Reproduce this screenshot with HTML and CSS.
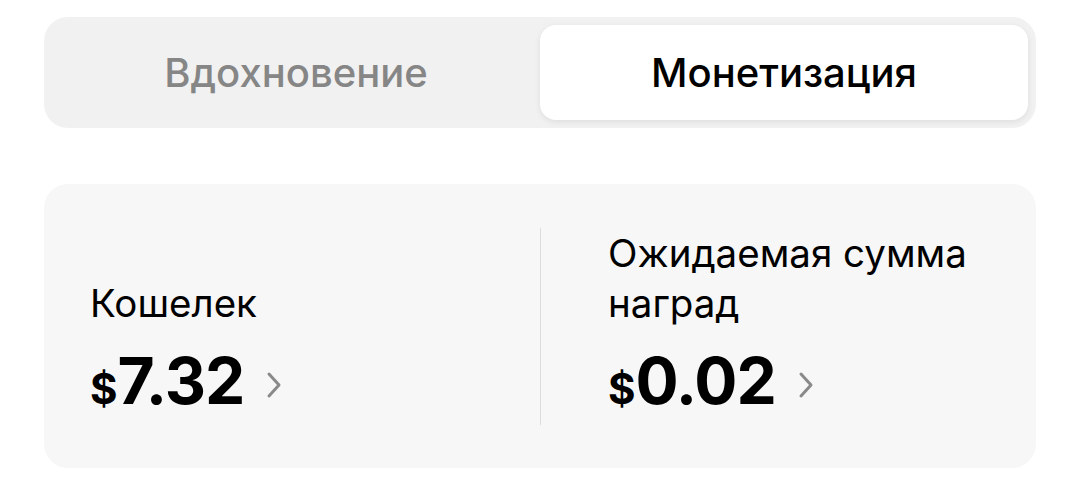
FILE: index.html
```html
<!DOCTYPE html>
<html lang="ru">
<head>
    <meta charset="UTF-8">
    <meta name="viewport" content="width=device-width, initial-scale=1.0">
    <title>Монетизация</title>
    <link rel="stylesheet" href="styles.css">
</head>
<body>
    <div class="page">
        <div class="tabs">
            <div class="tab">Вдохновение</div>
            <div class="tab active">Монетизация</div>
        </div>

        <div class="card">
            <div class="col">
                <div class="label">Кошелек</div>
                <div class="value">
                    <span class="currency">$</span><span class="amount">7.32</span>
                    <svg class="chevron" width="16" height="28" viewBox="0 0 16 28">
                        <path d="M3 3 L13 14 L3 25" fill="none" stroke="#8a8a8a" stroke-width="3" stroke-linecap="round" stroke-linejoin="round"/>
                    </svg>
                </div>
            </div>
            <div class="col col-right">
                <div class="label">Ожидаемая сумма<br>наград</div>
                <div class="value">
                    <span class="currency">$</span><span class="amount">0.02</span>
                    <svg class="chevron" width="16" height="28" viewBox="0 0 16 28">
                        <path d="M3 3 L13 14 L3 25" fill="none" stroke="#8a8a8a" stroke-width="3" stroke-linecap="round" stroke-linejoin="round"/>
                    </svg>
                </div>
            </div>
        </div>
    </div>
</body>
</html>
```

FILE: styles.css
```css
body {
    font-family: 'Inter', 'Liberation Sans', Arial, sans-serif;
    background-color: #FFFFFF;
    color: #000000;
    margin: 0;
    padding: 0;
}
.page {
    padding: 17px 44px 0 44px;
}
.tabs {
    display: flex;
    height: 111px;
    box-sizing: border-box;
    padding: 8px;
    background-color: #F1F1F1;
    border-radius: 24px;
}
.tab {
    flex: 1;
    display: flex;
    justify-content: center;
    align-items: center;
    font-size: 40px;
    font-weight: 500;
    color: #868686;
    border-radius: 16px;
}
.tab.active {
    background-color: #FFFFFF;
    color: #000000;
    box-shadow: 0 2px 6px rgba(0, 0, 0, 0.08);
}
.card {
    display: grid;
    grid-template-columns: 1fr 1fr;
    margin-top: 56px;
    height: 284px;
    box-sizing: border-box;
    padding: 44px 0;
    background-color: #F7F7F7;
    border-radius: 24px;
}
.col {
    min-width: 0;
    display: flex;
    flex-direction: column;
    justify-content: flex-end;
    padding-left: 46px;
}
.col-right {
    border-left: 1px solid #DCDCDC;
    padding-left: 67px;
}
.label {
    font-size: 38.5px;
    line-height: 50px;
}
.value {
    display: flex;
    align-items: baseline;
    margin-top: 17px;
    line-height: 72px;
    font-weight: bold;
}
.currency {
    font-size: 42px;
}
.amount {
    font-size: 64px;
    letter-spacing: -1px;
}
.chevron {
    margin-left: 22px;
    align-self: center;
}
```
